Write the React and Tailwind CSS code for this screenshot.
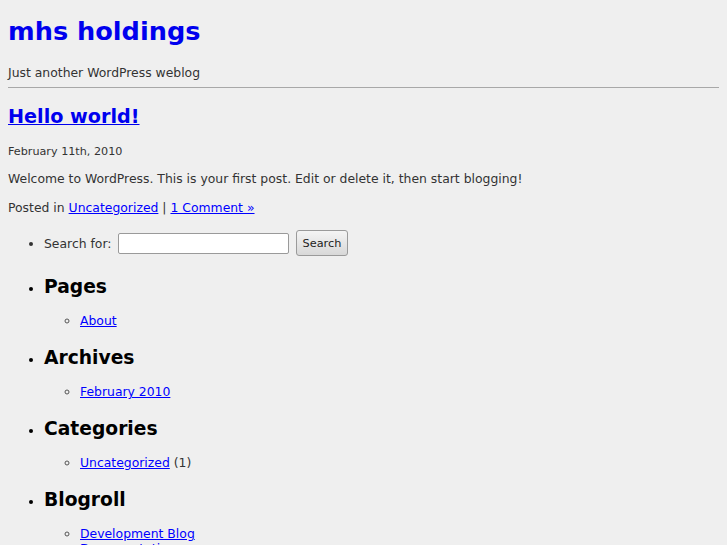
export default function App() {
  const font = { fontFamily: '"DejaVu Sans", sans-serif' };
  return (
    <div className="min-h-[545px] bg-[#efefef] text-[#333] px-2 pt-4 text-[12.4px] leading-[15px]" style={font}>
      <h1 className="text-[25.6px] leading-[30px] font-bold">
        <a href="#" className="text-[#0000ee] no-underline">mhs holdings</a>
      </h1>
      <div className="mt-[19px]">Just another WordPress weblog</div>
      <hr className="mt-[7px] border-0 border-t border-[#a8a8a8]" />
      <h2 className="mt-[18px] text-[19.2px] leading-[22px] font-bold">
        <a href="#" className="text-[#0000ee] underline">Hello world!</a>
      </h2>
      <div className="mt-[17px] text-[11.2px] leading-[13px]">February 11th, 2010</div>
      <p className="mt-[13px]">Welcome to WordPress. This is your first post. Edit or delete it, then start blogging!</p>
      <p className="mt-[14px]">
        Posted in <a href="#" className="text-[#0000ff] underline">Uncategorized</a> | <a href="#" className="text-[#0000ff] underline">1 Comment »</a>
      </p>
      <ul className="list-disc pl-[36px] mt-[15px] text-[#000]">
        <li className="text-[#333]">
          <div className="flex items-center h-[26px]">
            <span>Search for:</span>
            <input type="text" className="ml-[6px] w-[171px] h-[21px] bg-white border border-[#9a9a9a] rounded-[2px]" />
            <button className="ml-[7px] h-[26px] px-[6px] text-[11.3px] text-[#222] border border-[#9a9a9a] rounded-[3px] bg-gradient-to-b from-[#f4f4f4] to-[#d8d8d8]">Search</button>
          </div>
        </li>
        <Section title="Pages" first>
          <li><a href="#" className="text-[#0000ff] underline">About</a></li>
        </Section>
        <Section title="Archives">
          <li><a href="#" className="text-[#0000ff] underline">February 2010</a></li>
        </Section>
        <Section title="Categories">
          <li><a href="#" className="text-[#0000ff] underline">Uncategorized</a> <span className="text-[#333]">(1)</span></li>
        </Section>
        <Section title="Blogroll">
          <li><a href="#" className="text-[#0000ff] underline">Development Blog</a></li>
          <li><a href="#" className="text-[#0000ff] underline">Documentation</a></li>
          <li><a href="#" className="text-[#0000ff] underline">Plugins</a></li>
        </Section>
      </ul>
    </div>
  );
}

function Section({ title, children, first }) {
  return (
    <li className={first ? "mt-[20px]" : "mt-[19px]"}>
      <h2 className="text-[18.7px] leading-[22px] font-bold text-black">{title}</h2>
      <ul className="list-[circle] pl-[36px] mt-[15px] text-[#333] marker:text-[#555]">{children}</ul>
    </li>
  );
}
